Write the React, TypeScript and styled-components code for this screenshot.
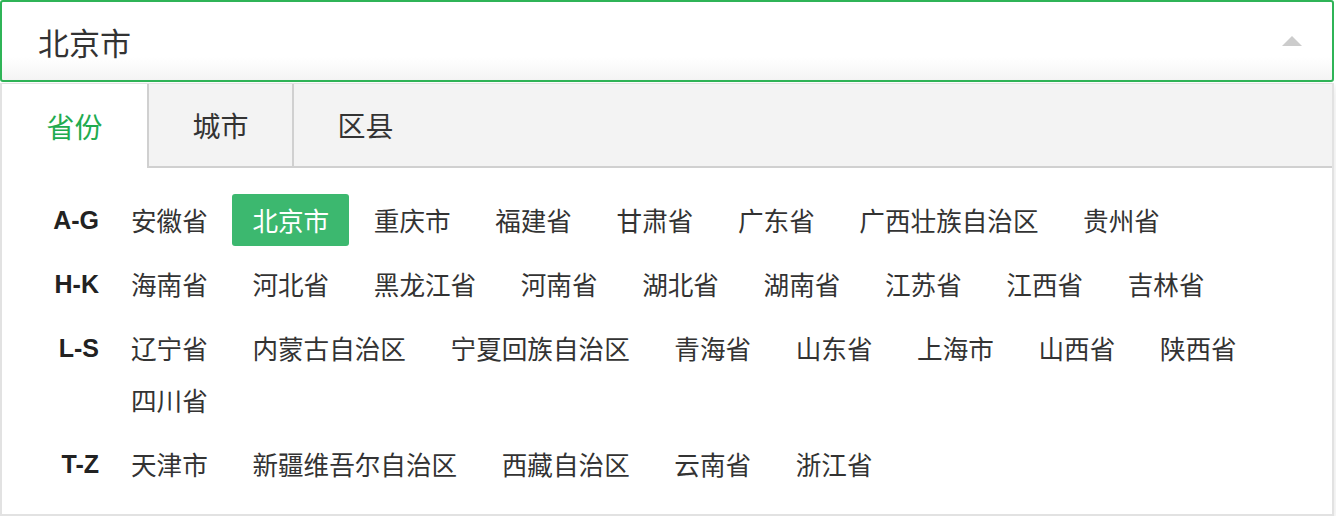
import { useState } from 'react';
import styled, { createGlobalStyle } from 'styled-components';

const GlobalStyle = createGlobalStyle`
  html, body {
    margin: 0;
    padding: 0;
    background: #ffffff;
    font-family: "Noto Sans CJK SC", "Noto Sans", sans-serif;
    color: #333333;
  }
`;

type Group = { label: string; items: string[] };

const groups: Group[] = [
  { label: 'A-G', items: ['安徽省', '北京市', '重庆市', '福建省', '甘肃省', '广东省', '广西壮族自治区', '贵州省'] },
  { label: 'H-K', items: ['海南省', '河北省', '黑龙江省', '河南省', '湖北省', '湖南省', '江苏省', '江西省', '吉林省'] },
  { label: 'L-S', items: ['辽宁省', '内蒙古自治区', '宁夏回族自治区', '青海省', '山东省', '上海市', '山西省', '陕西省', '四川省'] },
  { label: 'T-Z', items: ['天津市', '新疆维吾尔自治区', '西藏自治区', '云南省', '浙江省'] },
];

const tabs = ['省份', '城市', '区县'];

const App = () => {
  const [selected, setSelected] = useState('北京市');
  const [activeTab, setActiveTab] = useState(0);

  return (
    <>
      <GlobalStyle />
      <Wrapper>
        <Input>
          <Value>{selected}</Value>
          <Arrow />
        </Input>
        <Panel>
          <TabBar>
            {tabs.map((t, i) => (
              <Tab key={t} active={activeTab === i} first={i === 0} onClick={() => setActiveTab(i)}>
                {t}
              </Tab>
            ))}
          </TabBar>
          <Body>
            {groups.map((g) => (
              <Row key={g.label}>
                <Label>{g.label}</Label>
                <Items>
                  {g.items.map((name) => (
                    <Item key={name} active={selected === name} onClick={() => setSelected(name)}>
                      {name}
                    </Item>
                  ))}
                </Items>
              </Row>
            ))}
          </Body>
        </Panel>
      </Wrapper>
    </>
  );
};

export default App;

const Wrapper = styled.div`
  width: 1334px;
`;

const Input = styled.div`
  height: 82px;
  box-sizing: border-box;
  border: 2px solid #2fb457;
  border-radius: 3px;
  display: flex;
  align-items: center;
  justify-content: space-between;
  padding: 0 30px 0 36px;
  background: linear-gradient(to bottom, #ffffff 70%, #f4f4f4 100%);
`;

const Value = styled.span`
  font-size: 31px;
  color: #333333;
`;

const Arrow = styled.span`
  width: 0;
  height: 0;
  border-left: 10px solid transparent;
  border-right: 10px solid transparent;
  border-bottom: 10px solid #cccccc;
  margin-top: -1px;
`;

const Panel = styled.div`
  box-sizing: border-box;
  border: 2px solid #e2e2e2;
  border-top-width: 1px;
  margin-top: 1px;
  background: #ffffff;
  box-shadow: 0 4px 8px rgba(0, 0, 0, 0.12);
`;

const TabBar = styled.div`
  display: flex;
  height: 84px;
  background: #f3f3f3;
  border-bottom: 2px solid #d0d0d0;
  box-sizing: border-box;
`;

const Tab = styled.div<{ active: boolean; first: boolean }>`
  width: 145px;
  box-sizing: border-box;
  display: flex;
  align-items: center;
  justify-content: center;
  font-size: 28px;
  cursor: pointer;
  color: ${({ active }) => (active ? '#21ab4f' : '#333333')};
  background: ${({ active }) => (active ? '#ffffff' : 'transparent')};
  border-left: ${({ first }) => (first ? 'none' : '2px solid #d0d0d0')};
  margin-bottom: ${({ active }) => (active ? '-2px' : '0')};
`;

const Body = styled.div`
  padding: 26px 0 24px 0;
  display: flex;
  flex-direction: column;
  gap: 12px;
`;

const Row = styled.div`
  display: flex;
  align-items: flex-start;
`;

const Label = styled.div`
  flex: none;
  width: 97px;
  margin-right: 12px;
  height: 52px;
  line-height: 52px;
  text-align: right;
  font-family: "Liberation Sans", Arial, sans-serif;
  font-weight: bold;
  font-size: 25px;
  color: #222222;
`;

const Items = styled.div`
  flex: 1;
  display: flex;
  flex-wrap: wrap;
  column-gap: 4.6px;
`;

const Item = styled.span<{ active: boolean }>`
  height: 52px;
  line-height: 52px;
  padding: 0 20px;
  font-size: 25.6px;
  border-radius: 3px;
  cursor: pointer;
  color: ${({ active }) => (active ? '#ffffff' : '#333333')};
  background: ${({ active }) => (active ? '#3cb86f' : 'transparent')};
`;
